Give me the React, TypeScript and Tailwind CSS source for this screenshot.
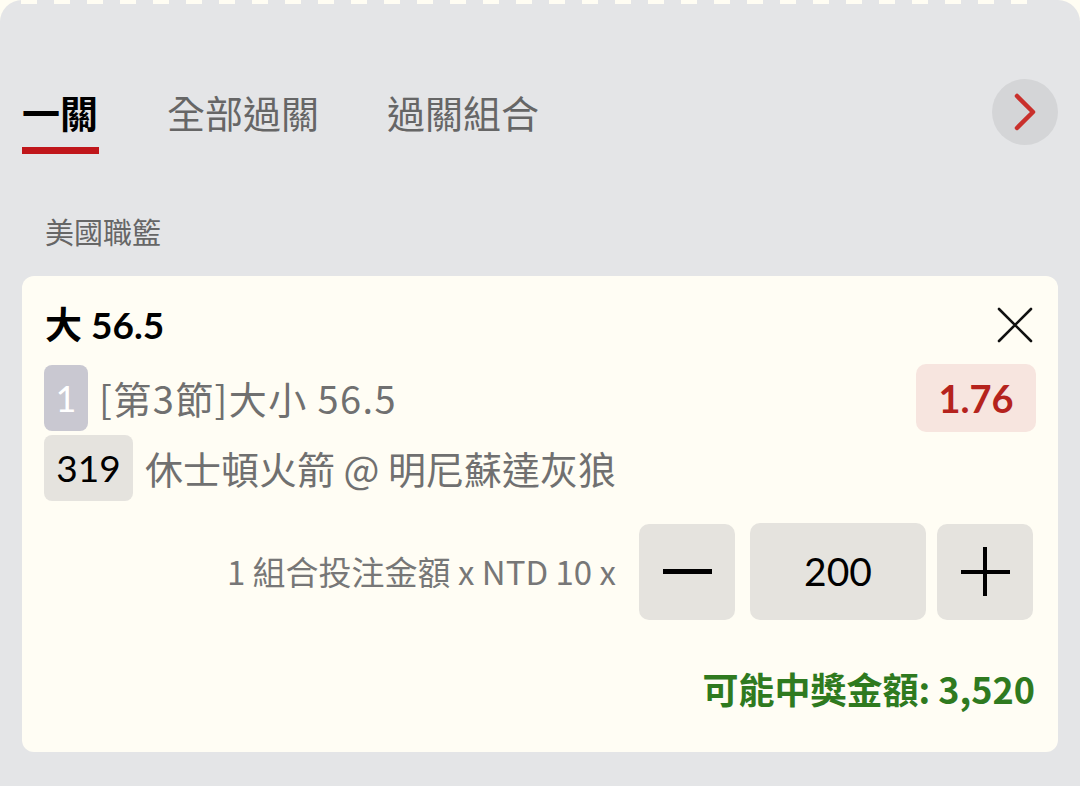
import React from "react";

const FONT = { fontFamily: 'Lato, "Noto Sans CJK TC", "Noto Sans", sans-serif' };
const CJK = { fontFamily: '"Noto Sans CJK TC", "Noto Sans", sans-serif' };

export default function App() {
  const dashes = Array.from({ length: 31 });
  return (
    <div className="w-[1080px] h-[786px] bg-[#fffdf3] overflow-hidden" style={FONT}>
      <div className="h-full bg-[#e4e5e7] rounded-t-[22px] flex flex-col">
        <div className="h-[4px] flex gap-[17px] pl-[21px]">
          {dashes.map((_, i) => (
            <div key={i} className="w-[16px] h-[4px] bg-[#fffdf3]" />
          ))}
        </div>

        {/* Tabs */}
        <div className="flex items-start justify-between pl-[22px] pr-[22px] mt-[75px]">
          <div className="flex gap-[68px] mt-[11px]" style={CJK}>
            <div className="flex flex-col">
              <div className="h-[44px] leading-[44px] text-[38px] font-bold text-black">一關</div>
              <div className="h-[7px] mt-[13px] bg-[#c0161b] w-[77px]" />
            </div>
            <div className="flex flex-col">
              <div className="h-[44px] leading-[44px] text-[38px] text-[#666666]">全部過關</div>
            </div>
            <div className="flex flex-col">
              <div className="h-[44px] leading-[44px] text-[38px] text-[#666666]">過關組合</div>
            </div>
          </div>
          <div className="w-[66px] h-[66px] rounded-full bg-[#d4d5d7] flex items-center justify-center">
            <svg width="30" height="40" viewBox="0 0 30 40" fill="none">
              <path d="M7 4 L23 20 L7 36" stroke="#c9302c" strokeWidth="4.5" strokeLinecap="round" strokeLinejoin="round" />
            </svg>
          </div>
        </div>

        {/* League */}
        <div className="pl-[45px] mt-[60px] h-[34px] leading-[34px] text-[29px] text-[#666666]" style={CJK}>
          美國職籃
        </div>

        {/* Card */}
        <div className="mx-[22px] mt-[28px] bg-[#fffdf4] rounded-[12px] pl-[22px] pr-[22px] pt-[29px] pb-[44px] flex flex-col">
          <div className="flex items-center justify-between h-[40px]">
            <div className="text-[37px] leading-[40px] font-bold text-black ml-[1px]">大 56.5</div>
            <svg width="38" height="38" viewBox="0 0 38 38" className="mr-[2px]">
              <path d="M3 3 L35 35 M35 3 L3 35" stroke="#111" strokeWidth="2.6" strokeLinecap="round" />
            </svg>
          </div>

          <div className="flex items-center justify-between mt-[19px]">
            <div className="flex items-center gap-[11px]">
              <div className="w-[44px] h-[66px] rounded-[8px] bg-[#c9c8d1] flex items-center justify-center text-[36px] text-white">1</div>
              <div className="text-[38px] text-[#707070] leading-[44px] tracking-[1.4px]" style={CJK}>[第3節]大小 56.5</div>
            </div>
            <div className="w-[120px] h-[68px] rounded-[10px] bg-[#f7e5df] flex items-center justify-center text-[38px] font-bold text-[#b5231d]">
              1.76
            </div>
          </div>

          <div className="flex items-center gap-[12px] mt-[3px]">
            <div className="w-[89px] h-[66px] rounded-[8px] bg-[#e5e3de] flex items-center justify-center text-[37px] text-black">319</div>
            <div className="text-[38px] text-[#707070] leading-[44px]" style={CJK}>休士頓火箭 @ 明尼蘇達灰狼</div>
          </div>

          <div className="flex items-center justify-end mt-[22px] pr-[3px]">
            <div className="text-[33px] text-[#777777] mr-[23px]" style={CJK}>1 組合投注金額 x NTD 10 x</div>
            <div className="w-[96px] h-[96px] rounded-[10px] bg-[#e5e3de] flex items-center justify-center">
              <div className="w-[49px] h-[5px] bg-black" />
            </div>
            <div className="w-[176px] h-[97px] rounded-[10px] bg-[#e5e3de] ml-[15px] flex items-center justify-center text-[39px] text-black">
              200
            </div>
            <div className="w-[96px] h-[96px] rounded-[10px] bg-[#e5e3de] ml-[11px] flex items-center justify-center relative">
              <div className="w-[49px] h-[4px] bg-black" />
              <div className="absolute w-[4px] h-[49px] bg-black" />
            </div>
          </div>

          <div className="mt-[48px] text-right text-[36px] leading-[40px] font-bold text-[#2f7a1f] pr-[1px]" style={CJK}>
            可能中獎金額: 3,520
          </div>
        </div>
      </div>
    </div>
  );
}
